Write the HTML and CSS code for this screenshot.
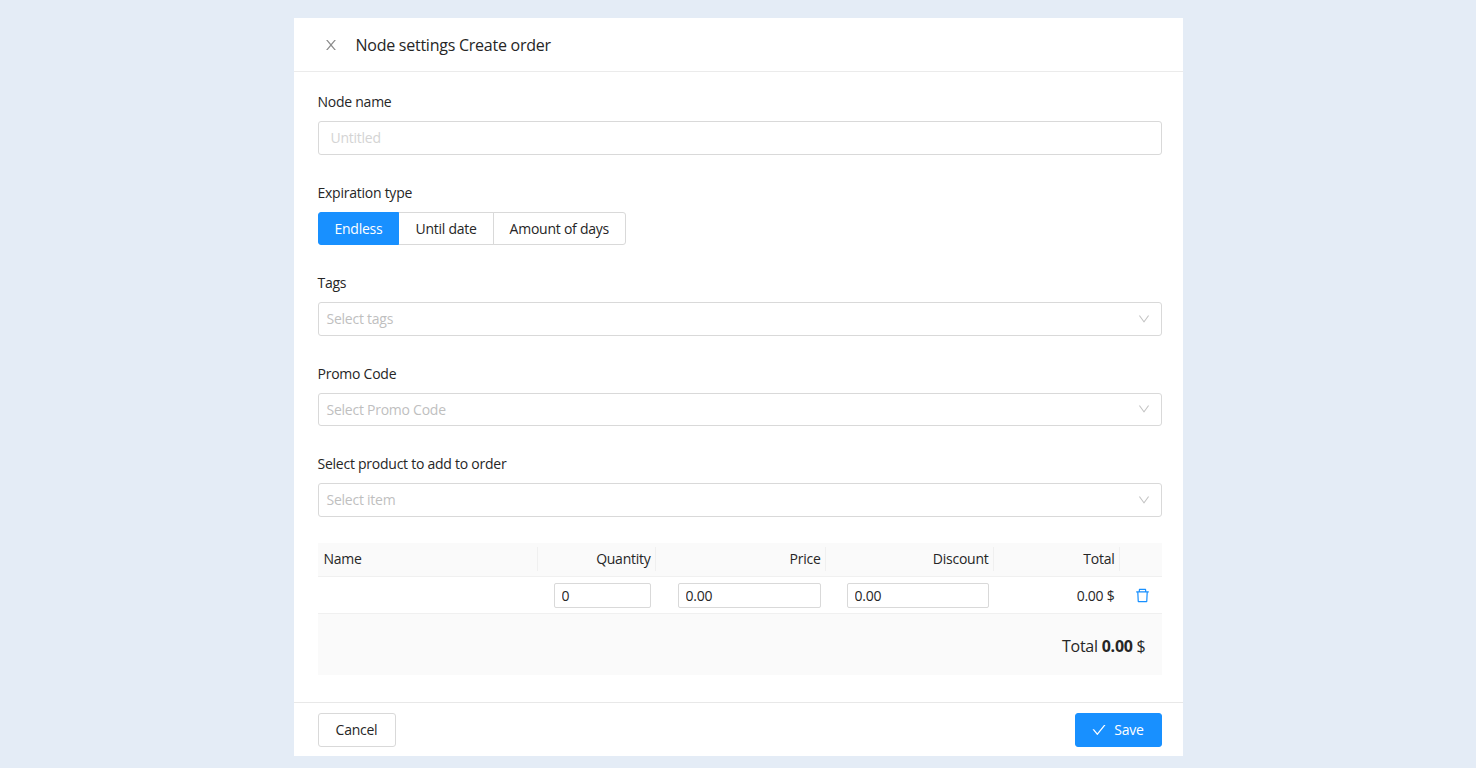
FILE: index.html
```html
<!DOCTYPE html>
<html lang="en">
<head>
    <meta charset="UTF-8">
    <meta name="viewport" content="width=device-width, initial-scale=1.0">
    <title>Node settings</title>
    <link rel="stylesheet" href="styles.css">
</head>
<body>
    <div class="drawer">
        <div class="drawer-header">
            <svg class="close-icon" viewBox="64 64 896 896"><path d="M563.8 512l262.5-312.9c4.4-5.2.7-13.1-6.1-13.1h-79.8c-4.7 0-9.2 2.1-12.3 5.7L511.6 449.8 295.1 191.7c-3-3.6-7.5-5.7-12.3-5.7H203c-6.8 0-10.5 7.9-6.1 13.1L459.4 512 196.9 824.9A7.95 7.95 0 0 0 203 838h79.8c4.7 0 9.2-2.1 12.3-5.7l216.5-258.1 216.5 258.1c3 3.6 7.5 5.7 12.3 5.7h79.8c6.8 0 10.5-7.9 6.1-13.1L563.8 512z"/></svg>
            <h2>Node settings Create order</h2>
        </div>
        <div class="drawer-body">
            <div class="form-item">
                <label>Node name</label>
                <input class="text-input" type="text" placeholder="Untitled">
            </div>
            <div class="form-item">
                <label>Expiration type</label>
                <div class="radio-group">
                    <button class="radio active">Endless</button>
                    <button class="radio">Until date</button>
                    <button class="radio">Amount of days</button>
                </div>
            </div>
            <div class="form-item">
                <label>Tags</label>
                <div class="select">
                    <span>Select tags</span>
                    <svg class="arrow-icon" viewBox="64 64 896 896"><path d="M884 256h-75c-5.1 0-9.9 2.5-12.9 6.6L512 654.2 227.9 262.6c-3-4.1-7.8-6.6-12.9-6.6h-75c-6.5 0-10.3 7.4-6.5 12.7l352.6 486.1c12.8 17.6 39 17.6 51.7 0l352.6-486.1c3.9-5.3.1-12.7-6.4-12.7z"/></svg>
                </div>
            </div>
            <div class="form-item">
                <label>Promo Code</label>
                <div class="select">
                    <span>Select Promo Code</span>
                    <svg class="arrow-icon" viewBox="64 64 896 896"><path d="M884 256h-75c-5.1 0-9.9 2.5-12.9 6.6L512 654.2 227.9 262.6c-3-4.1-7.8-6.6-12.9-6.6h-75c-6.5 0-10.3 7.4-6.5 12.7l352.6 486.1c12.8 17.6 39 17.6 51.7 0l352.6-486.1c3.9-5.3.1-12.7-6.4-12.7z"/></svg>
                </div>
            </div>
            <div class="form-item">
                <label>Select product to add to order</label>
                <div class="select">
                    <span>Select item</span>
                    <svg class="arrow-icon" viewBox="64 64 896 896"><path d="M884 256h-75c-5.1 0-9.9 2.5-12.9 6.6L512 654.2 227.9 262.6c-3-4.1-7.8-6.6-12.9-6.6h-75c-6.5 0-10.3 7.4-6.5 12.7l352.6 486.1c12.8 17.6 39 17.6 51.7 0l352.6-486.1c3.9-5.3.1-12.7-6.4-12.7z"/></svg>
                </div>
            </div>
            <table class="products">
                <colgroup>
                    <col class="col-name">
                    <col class="col-qty">
                    <col class="col-price">
                    <col class="col-discount">
                    <col class="col-total">
                    <col class="col-action">
                </colgroup>
                <thead>
                    <tr>
                        <th class="left"><span class="th-inner">Name</span></th>
                        <th><span class="th-inner">Quantity</span></th>
                        <th><span class="th-inner">Price</span></th>
                        <th><span class="th-inner">Discount</span></th>
                        <th><span class="th-inner">Total</span></th>
                        <th></th>
                    </tr>
                </thead>
                <tbody>
                    <tr>
                        <td></td>
                        <td><input class="cell-input qty" type="text" value="0"></td>
                        <td><input class="cell-input price" type="text" value="0.00"></td>
                        <td><input class="cell-input discount" type="text" value="0.00"></td>
                        <td>0.00 $</td>
                        <td class="action">
                            <svg class="delete-icon" viewBox="64 64 896 896"><path d="M360 184h-8c4.4 0 8-3.6 8-8v8h304v-8c0 4.4 3.6 8 8 8h-8v72h72v-80c0-35.3-28.7-64-64-64H352c-35.3 0-64 28.7-64 64v80h72v-72zm504 72H160c-17.7 0-32 14.3-32 32v32c0 4.4 3.6 8 8 8h60.4l24.7 523c1.6 34.1 29.8 61 63.9 61h454c34.2 0 62.3-26.8 63.9-61l24.7-523H888c4.4 0 8-3.6 8-8v-32c0-17.7-14.3-32-32-32zM731.3 840H292.7l-24.2-512h487l-24.2 512z"/></svg>
                        </td>
                    </tr>
                </tbody>
            </table>
            <div class="order-total">Total <b>0.00</b> $</div>
        </div>
        <div class="drawer-footer">
            <button class="btn">Cancel</button>
            <button class="btn btn-primary">
                <svg class="check-icon" viewBox="64 64 896 896"><path d="M912 190h-69.9c-9.8 0-19.1 4.5-25.1 12.2L404.7 724.5 207 474a32 32 0 0 0-25.1-12.2H112c-6.7 0-10.4 7.7-6.3 12.9l273.9 347c12.8 16.2 37.4 16.2 50.3 0l488.4-618.9c4.1-5.1.4-12.8-6.3-12.8z"/></svg>
                Save
            </button>
        </div>
    </div>
</body>
</html>
```

FILE: styles.css
```css
* {
    box-sizing: border-box;
}

body {
    margin: 0;
    height: 768px;
    padding: 18px 0 12px;
    overflow: hidden;
    background-color: #e4ecf6;
    font-family: "Open Sans", "Noto Sans", sans-serif;
    font-size: 14px;
    letter-spacing: -0.25px;
    color: #262626;
}

.drawer {
    display: flex;
    flex-direction: column;
    width: 889px;
    height: 738px;
    margin: 0 auto;
    background-color: #fff;
}

.drawer-header {
    display: flex;
    align-items: center;
    height: 54px;
    padding: 0 24px 0 30px;
    border-bottom: 1px solid #ebebeb;
}

.drawer-header h2 {
    margin: 0 0 0 18px;
    font-size: 16px;
    font-weight: 400;
}

.close-icon {
    width: 14px;
    height: 14px;
    fill: #8c8c8c;
}

.drawer-body {
    flex: 1;
    padding: 19px 21px 0 24px;
}

.form-item {
    margin-bottom: 27px;
}

.form-item label {
    display: block;
    height: 22px;
    margin-bottom: 8px;
    line-height: 22px;
}

.text-input {
    display: block;
    width: 100%;
    height: 33.5px;
    padding: 0 12px;
    border: 1px solid #d9d9d9;
    border-radius: 3px;
    outline: none;
    font: inherit;
    letter-spacing: inherit;
}

.text-input::placeholder {
    color: #d4d4d4;
}

.radio-group {
    display: flex;
    height: 33.5px;
}

.radio {
    margin-left: -1px;
    padding: 0 16px;
    border: 1px solid #d9d9d9;
    background-color: #fff;
    font: inherit;
    letter-spacing: inherit;
    color: #262626;
}

.radio:first-child {
    margin-left: 0;
    border-radius: 3px 0 0 3px;
}

.radio:last-child {
    border-radius: 0 3px 3px 0;
}

.radio.active {
    position: relative;
    border-color: #1890ff;
    background-color: #1890ff;
    color: #fff;
}

.select {
    display: flex;
    align-items: center;
    justify-content: space-between;
    height: 33.5px;
    padding: 0 11px 0 8px;
    border: 1px solid #d9d9d9;
    border-radius: 3px;
    color: #bfbfbf;
}

.arrow-icon {
    width: 12px;
    height: 12px;
    fill: #c4c4c4;
}

.products {
    width: 844px;
    margin-top: -1px;
    border-collapse: collapse;
    table-layout: fixed;
}

.col-name { width: 220px; }
.col-qty { width: 118px; }
.col-price { width: 170px; }
.col-discount { width: 168px; }
.col-total { width: 126px; }
.col-action { width: 42px; }

.products th {
    height: 34px;
    padding: 0 5px 0 0;
    border-bottom: 1px solid #f0f0f0;
    background-color: #fafafa;
    font-weight: 400;
    text-align: right;
}

.products th.left {
    padding-left: 6px;
    text-align: left;
}

.th-inner {
    display: block;
    line-height: 22px;
}

.products th:not(:last-child) {
    background-image: linear-gradient(#f0f0f0, #f0f0f0);
    background-repeat: no-repeat;
    background-position: right center;
    background-size: 1px 24px;
}

.products td {
    height: 37px;
    padding: 0 5px 0 0;
    border-bottom: 1px solid #f0f0f0;
    text-align: right;
}

.products td.action {
    padding: 0 0 0 3px;
    text-align: center;
}

.cell-input {
    display: inline-block;
    height: 25px;
    padding: 0 7px;
    border: 1px solid #d9d9d9;
    border-radius: 2px;
    outline: none;
    font: inherit;
    letter-spacing: inherit;
    color: #262626;
    vertical-align: middle;
}

.qty { width: 97px; }
.price { width: 143px; }
.discount { width: 142px; }

.delete-icon {
    display: block;
    width: 15px;
    height: 15px;
    margin: 0 auto;
    fill: #1890ff;
}

.order-total {
    height: 61px;
    padding-right: 16px;
    background-color: #fafafa;
    font-size: 16px;
    line-height: 64px;
    text-align: right;
}

.drawer-footer {
    display: flex;
    justify-content: space-between;
    align-items: center;
    height: 54px;
    padding: 0 21px 0 24px;
    border-top: 1px solid #e8e8e8;
}

.btn {
    display: flex;
    align-items: center;
    justify-content: center;
    height: 34px;
    width: 78px;
    border: 1px solid #d9d9d9;
    border-radius: 3px;
    background-color: #fff;
    font: inherit;
    letter-spacing: inherit;
    color: #262626;
}

.btn-primary {
    width: 87px;
    border-color: #1890ff;
    background-color: #1890ff;
    color: #fff;
}

.check-icon {
    width: 14px;
    height: 14px;
    margin-right: 8px;
    fill: #fff;
}
```
